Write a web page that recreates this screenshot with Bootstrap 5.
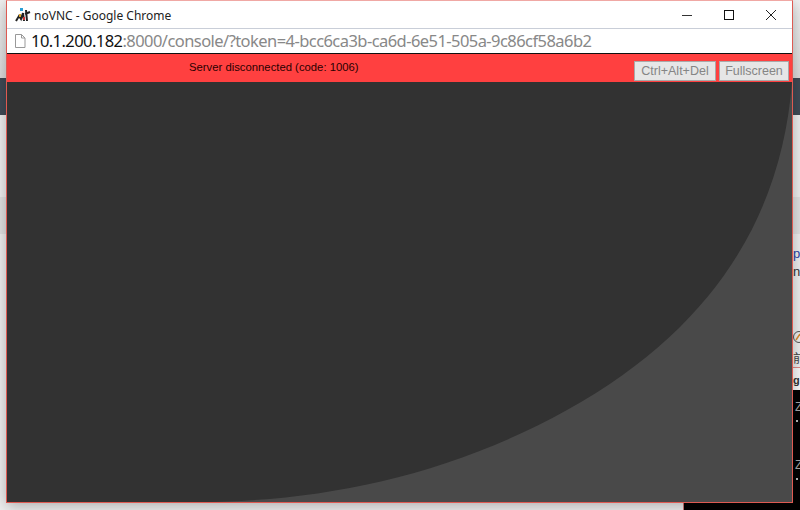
<!DOCTYPE html>
<html lang="en">
<head>
<meta charset="utf-8">
<title>noVNC</title>
<link href="https://cdn.jsdelivr.net/npm/bootstrap@5.3.0/dist/css/bootstrap.min.css" rel="stylesheet">
<style>
html,body{margin:0;height:510px;overflow:hidden}
body{background:#efefef;font-family:"Liberation Sans",Arial,sans-serif;position:relative}
.backdrop-top{height:115px;background:linear-gradient(#f1f1f1 0,#dcdcdc 78px,#3f4a55 78px,#3f4a55 115px)}
.backdrop-band{position:absolute;left:0;top:197px;width:100%;height:37px;background:#e2e2e2}
.backdrop-line{position:absolute;left:793px;top:367px;width:7px;height:23px;background:#fafafa;border-top:1px solid #e08a86}
.backdrop-black{position:absolute;left:683px;top:390px;width:117px;height:120px;background:#000;border-left:1px solid #c77}
.backdrop-side{position:absolute;left:793px;top:246px;width:7px;height:142px;font-size:13px;line-height:16px;overflow:hidden;white-space:nowrap}
.backdrop-side svg{display:block;margin-bottom:6px}
.backdrop-side .c1{color:#2a3fa5;display:block;margin-bottom:2px}
.backdrop-side .c2{color:#333;display:block;margin-bottom:50px}
.backdrop-side .c3{display:block;color:#444;font-family:"Noto Sans CJK SC",sans-serif;font-size:12px;line-height:16px;margin-bottom:6px}
.backdrop-side .c4{display:block;font-weight:bold;color:#333;font-size:11px;line-height:16px}
.term-z{position:absolute;left:795px;color:#aaa;font-size:12px;line-height:14px}
.term-z1{top:400px}
.term-z2{top:458px}
.term-dot{position:absolute;left:796px;width:2px;height:2px;background:#bbb}
.term-d1{top:420px}
.term-d2{top:478px}
.vnc-window{position:absolute;left:6px;top:0;width:787px;height:503px;border:1px solid #dd5a52;border-top-color:#f0a8a4;background:#fff;box-shadow:0 3px 14px rgba(0,0,0,.28)}
.win-title{height:27px;padding-left:7px}
.win-title-text{font-size:12px;color:#222;font-family:"Noto Sans",sans-serif;margin-left:2px;margin-top:2px}
.win-ctrls{margin-left:auto;padding-right:0}
.win-ctrl{width:42px;height:27px}
.url-row{height:25px;border-top:1px solid #c9ced8;padding-left:7px}
.url-text{font-size:16.5px;font-family:"Noto Sans",sans-serif;margin-left:5px;letter-spacing:-.034em;white-space:nowrap;color:#888}
.url-text b{font-weight:400;color:#111}
.vnc-bar{height:29px;background:#ff4040;border-top:1px solid #111;font-size:11.3px;color:#2a0000;padding:0 3px 0 182px}
.vnc-status{padding-bottom:2px}
.vnc-btn{height:20px;padding:0;font-size:12.5px;background:#e6e6e6;color:#858585;border:1px solid #a9a9a9;border-radius:0;line-height:16px;margin-top:7px}
.vnc-btn-a{width:82px;margin-right:3px}
.vnc-btn-b{width:70px}
.vnc-canvas{height:420px;flex:none;background:#494949;overflow:hidden}
.vnc-canvas svg{display:block}
</style>
</head>
<body>
<div class="backdrop-top"></div>
<div class="backdrop-band"></div>
<div class="backdrop-line"></div>
<div class="backdrop-black"></div>
<div class="backdrop-side"><span class="c1">p</span><span class="c2">n</span><svg width="7" height="14"><circle cx="6" cy="7" r="5.500" fill="none" stroke="#555"/><path d="M3 10l4-6" stroke="#d98a2b" stroke-width="1.500"/></svg><span class="c3">前</span><span class="c4">g</span></div>
<span class="term-z term-z1">Z</span><span class="term-dot term-d1"></span><span class="term-z term-z2">Z</span><span class="term-dot term-d2"></span>
<div class="vnc-window d-flex flex-column">
  <div class="win-title d-flex align-items-center">
    <svg width="18" height="18" viewBox="0 0 18 18"><path d="M2 15l3-5 2 3 2-6 1 8" fill="none" stroke="#222" stroke-width="2"/><path d="M12 4l1 11M11 8l5-2" fill="none" stroke="#222" stroke-width="2"/><rect x="6" y="2" width="3" height="3" fill="#2a9fd6"/><rect x="5" y="8" width="2" height="3" fill="#d6a02a"/><rect x="9" y="11" width="2" height="3" fill="#c33"/></svg>
    <span class="win-title-text">noVNC - Google Chrome</span>
    <div class="win-ctrls d-flex">
      <div class="win-ctrl d-flex align-items-center justify-content-center"><svg width="12" height="12"><path d="M1 6.500h10" stroke="#333"/></svg></div>
      <div class="win-ctrl d-flex align-items-center justify-content-center"><svg width="12" height="12"><rect x="1.500" y="1.500" width="9" height="9" fill="none" stroke="#111"/></svg></div>
      <div class="win-ctrl d-flex align-items-center justify-content-center"><svg width="12" height="12"><path d="M1 1l10 10M11 1L1 11" stroke="#222"/></svg></div>
    </div>
  </div>
  <div class="url-row d-flex align-items-center">
    <svg width="12" height="14" viewBox="0 0 12 14"><path d="M1.500.5h6l3.500 3.500v9.500h-9.500zM7.500.5v3.500h3.500" fill="#fff" stroke="#999"/></svg>
    <span class="url-text"><b>10.1.200.182</b>:8000/console/?token=4-bcc6ca3b-ca6d-6e51-505a-9c86cf58a6b2</span>
  </div>
  <div class="vnc-bar d-flex align-items-center justify-content-between">
    <span class="vnc-status">Server disconnected (code: 1006)</span>
    <div class="d-flex align-self-start">
      <button type="button" class="btn vnc-btn vnc-btn-a">Ctrl+Alt+Del</button>
      <button type="button" class="btn vnc-btn vnc-btn-b">Fullscreen</button>
    </div>
  </div>
  <div class="vnc-canvas">
    <svg width="785" height="420" viewBox="0 0 785 420"><path d="M0 0H785C775 130 710 245 560 328C440 395 310 420 190 420H0Z" fill="#323232"/></svg>
  </div>
</div>
</body>
</html>
